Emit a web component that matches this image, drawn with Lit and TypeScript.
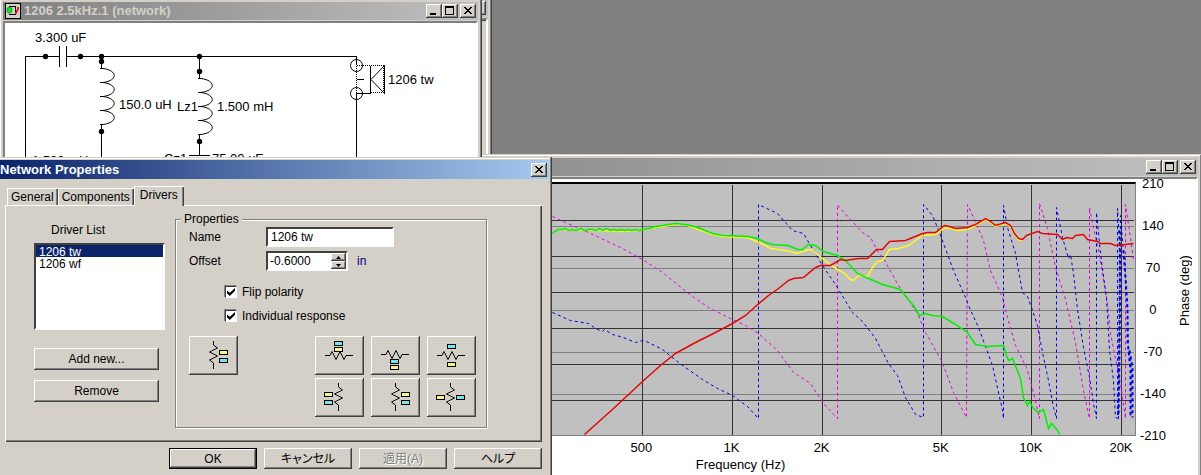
import { LitElement, html, css, svg, nothing } from "lit";
import { customElement, property, state } from "lit/decorators.js";
import { classMap } from "lit/directives/class-map.js";

type Point = [number, number];

const base = css`
  :host {
    display: block;
    box-sizing: border-box;
    font-family: "Liberation Sans", "Noto Sans CJK JP", sans-serif;
    font-size: 12px;
    line-height: 14px;
    color: #000;
  }
  *, *::before, *::after { box-sizing: border-box; }
  button, input, select { font: inherit; color: inherit; margin: 0; border-radius: 0; }
  button {
    display: flex;
    align-items: center;
    justify-content: center;
    padding: 0;
    border: 0;
    background: #d4d0c8;
    box-shadow: inset -1px -1px #404040, inset 1px 1px #fff, inset -2px -2px #808080;
  }
`;

/* Window frame with a title bar; the body is slotted in. */
@customElement("window-frame")
class WindowFrame extends LitElement {
  @property() caption = "";
  @property({ type: Boolean }) active = false;
  @property({ type: Boolean }) dialog = false;

  static styles = [base, css`
    .frame {
      height: 100%;
      display: flex;
      flex-direction: column;
      padding: 4px;
      background: #d4d0c8;
      box-shadow: inset -1px -1px #404040, inset 1px 1px #d4d0c8, inset -2px -2px #808080, inset 2px 2px #fff;
    }
    .dialog { padding: 3px; }
    .bar {
      flex: none;
      display: flex;
      align-items: center;
      gap: 3px;
      height: 18px;
      padding: 0 2px;
      color: #d4d0c8;
      background: linear-gradient(to right, #808080, #c0c0c0);
      font-size: 13px;
      font-weight: bold;
    }
    .active .bar { height: 19px; padding-left: 0; color: #fff; background: linear-gradient(to right, #0a246a, #a6caf0); }
    .caption { flex: 1; white-space: nowrap; overflow: hidden; }
    .controls { display: flex; }
    .controls button { width: 16px; height: 14px; color: #000; }
    .controls .close { margin-left: 2px; }
    .body { flex: 1; min-height: 0; margin-top: 1px; border: 2px solid; border-color: #808080 #fff #fff #808080; box-shadow: inset 1px 1px #404040; overflow: hidden; }
    .dialog .body { border: 0; box-shadow: none; margin: 0; overflow: visible; }
    svg { display: block; shape-rendering: crispEdges; }
  `];

  render() {
    return html`
      <section class=${classMap({ frame: true, active: this.active, dialog: this.dialog })}>
        <header class="bar">
          <slot name="icon"></slot>
          <span class="caption">${this.caption}</span>
          <span class="controls">
            ${this.dialog ? nothing : html`
              <button aria-label="Minimize"><svg width="16" height="14"><path d="M4 9h6v2H4z" /></svg></button>
              <button aria-label="Maximize"><svg width="16" height="14"><path fill-rule="evenodd" d="M3 2h9v9H3zM4 4v6h7V4z" /></svg></button>`}
            <button class="close" aria-label="Close"><svg width="16" height="14"><path d="M4 3h2v1h1v1h2V4h1V3h2v1h-1v1h-1v1H9v1h1v1h1v1h1v1h-2V9H9V8H7v1H6v1H4V9h1V8h1V7h1V6H6V5H5V4H4z" /></svg></button>
          </span>
        </header>
        <div class="body"><slot></slot></div>
      </section>`;
  }
}

/* Crossover circuit drawing. */
@customElement("network-schematic")
class NetworkSchematic extends LitElement {
  static styles = [base, css`
    :host { background: #fff; height: 100%; }
    svg { display: block; font-size: 13px; }
    .wire { fill: none; stroke: #000; shape-rendering: crispEdges; }
    .coil { fill: none; stroke: #000; }
    .dots { stroke-dasharray: 1 1; }
  `];

  private coil(x: number, y: number) {
    const turns = [0, 14, 28, 42].map((d) => `M${x - 1} ${y + d}h3c15 2 15 12 0 14h-3`).join("");
    return svg`<path class="coil" d=${turns} />`;
  }

  render() {
    const nodes: Point[] = [[45, 56], [80, 56], [101, 56], [101, 61], [101, 131], [199, 56], [199, 71], [199, 141]];
    const labels: [number, number, string][] = [
      [35, 42, "3.300 uF"], [119, 109, "150.0 uH"], [177, 111, "Lz1"], [217, 111, "1.500 mH"],
      [388, 84, "1206 tw"], [164, 163, "Cz1"], [212, 163, "75.00 uF"], [32, 165, "1.500 mH"],
    ];
    return html`
      <svg width="472" height="160" viewBox="5 23 472 160" role="img" aria-label="Network schematic">
        <path class="wire" d="M25.5 190V56.5H59.5M59.5 46v21M66.5 46v21M66.5 56.5H356.5V65M101.5 56v12M101.5 124v66M199.5 56v22M199.5 134v21M189 155.5h21M356.5 190V93.5H370.5V66M357 79.5h7M384.5 65v29" />
        <path class="wire dots" d="M356.5 66v27M357 65.5h28M371 92.5h14M383.5 66v27" />
        <path class="coil" d="M384 66L371 79.500L384 93" />
        <circle class="coil" cx="356.500" cy="65.500" r="6" />
        <circle class="coil" cx="356.500" cy="93.500" r="6" />
        ${this.coil(101, 68.5)} ${this.coil(199, 78.5)}
        ${nodes.map(([x, y]) => svg`<circle cx=${x + 0.5} cy=${y + 0.5} r="2.700" />`)}
        ${labels.map(([x, y, t]) => svg`<text x=${x} y=${y}>${t}</text>`)}
      </svg>`;
  }
}

const PLOT = { left: 345, top: 184, width: 790, height: 251 };

const GREEN = "552,233 554,231 558,229 562,229 565,228 568,230 572,229 576,230 580,228 584,230 588,229 592,229 596,230 599,228 602,230 606,228 610,230 613,229 617,230 621,229 624,230 628,229 631,230 635,229 639,230 642,229 648,228 655,226 662,225 668,224 675,223 685,224 694,226 702,229 712,233 722,235 748,236 757,238 765,242 772,244 788,245 797,249 802,249 808,244 815,245 823,251 837,255 845,260 857,273 868,278 882,284 900,289 906,297 913,305 919,315 925,313 932,315 942,316 955,324 967,332 975,344 987,346 1003,345 1006,355 1008,360 1012,358 1020,378 1023,397 1027,405 1029,401 1033,408 1038,412 1043,409 1048,428 1051,423 1057,430 1059,434";
const YELLOW = "558,229 600,230 620,231 635,230 655,227 675,224 685,224 695,228 712,234 722,236 745,237 752,239 765,245 770,248 785,250 797,253 805,250 810,249 815,252 823,259 837,269 843,272 850,279 853,280 858,275 867,276 872,267 877,261 882,260 889,249 898,248 908,245 922,235 935,234 944,227 950,228 957,230 967,229 975,225 985,219 990,222 995,226 1005,223 1010,226 1014,234 1018,239 1022,240";
const RED = "584,434 613,408 642,381 660,365 675,353 695,342 713,333 732,323 745,315 755,306 768,295 778,288 788,280 793,278 803,277 815,267 820,265 830,265 840,259 845,260 858,258 867,258 876,249 882,249 889,241 905,240 922,233 927,232 935,232 944,225 949,226 955,228 967,227 975,224 985,218 990,221 995,225 1005,222 1010,225 1014,233 1018,238 1022,239 1026,235 1037,231 1042,233 1057,234 1062,239 1066,237 1072,238 1075,235 1083,234 1087,239 1097,241 1100,243 1110,243 1115,245 1125,244 1133,243";
const BLUE = "552,312 570,320 588,323 595,328 602,331 604,329 612,334 623,337 635,342 642,340 646,341 662,349 678,362 702,379 717,388 732,395 747,406 758,418 758,204 777,213 792,230 803,233 822,265 835,284 852,312 862,321 875,338 888,363 897,375 905,397 915,414 923,417 923,204 932,215 939,232 953,270 965,297 968,305 978,327 992,365 1002,410 1003,418 1003,205 1007,227 1015,253 1022,292 1027,296 1031,307 1037,325 1042,352 1048,380 1053,407 1056,418 1056,207 1062,237 1068,258 1070,254 1073,273 1077,309 1083,347 1089,377 1093,403 1096,418 1096,212 1100,253 1106,298 1109,350 1113,380 1115,417 1117,418 1117,208 1119,240 1118,418 1120,215 1125,277 1127,309 1128,350 1131,367 1130,417";
const BLUE_TAIL = "1119,230 1120,280 1118,416 M1123,250 1125,277 1127,309 1127,340 1130,370 1130,417 M1129,350 1132,367 1132,417";
const MAGENTA = "552,216 565,222 588,232 620,247 642,259 662,272 688,293 708,307 732,319 745,325 758,333 777,350 793,372 810,383 823,403 837,418 837,204 840,208 862,232 870,237 878,252 883,258 898,285 905,295 917,313 925,332 941,360 953,392 966,417 967,204 973,217 983,240 990,270 1002,297 1007,317 1015,345 1026,367 1032,388 1039,418 1039,203 1047,228 1055,267 1065,299 1075,342 1083,390 1089,418 1089,207 1093,227 1098,250 1107,303 1110,333 1120,383 1125,418 1125,204 1130,237 1133,260";

/* Frequency response and phase plot. */
@customElement("response-chart")
class ResponseChart extends LitElement {
  static styles = [base, css`
    :host { height: 100%; background: #fff; font-size: 13px; }
    .chart {
      display: grid;
      grid-template-columns: minmax(0, 1fr) 32px 24px;
      grid-template-rows: 258px 20px 16px;
      padding: 0 4px 0 39px;
    }
    .plot { border: 2px solid; border-color: #000 #808080 #808080 #000; border-right-width: 1px; border-left-width: 0; border-bottom-width: 1px; background: #c0c0c0; margin-top: 3px; height: 254px; }
    svg { display: block; width: 100%; height: 100%; overflow: visible; }
    path { vector-effect: non-scaling-stroke; }
    .major { fill: none; stroke: #333; shape-rendering: crispEdges; }
    .minor { fill: none; stroke: #808080; shape-rendering: crispEdges; }
    .trace { fill: none; }
    .green { stroke: #00f000; stroke-width: 1.500; }
    .yellow { stroke: #fff820; stroke-width: 1.500; }
    .red { stroke: #e00808; stroke-width: 1.500; }
    .blue { stroke: #0000d8; stroke-dasharray: 3 3; }
    .heavy { stroke: #0000f0; stroke-width: 2; }
    .magenta { stroke: #e000e0; stroke-dasharray: 3 3; }
    .middle { text-anchor: middle; }
    .name { text-align: center; line-height: 16px; }
    .side { writing-mode: vertical-rl; transform: rotate(180deg); justify-self: end; text-align: center; padding-top: 34px; }
  `];

  render() {
    const xs: [number, string][] = [[642, "500"], [732, "1K"], [822, "2K"], [941, "5K"], [1031, "10K"], [1121, "20K"]];
    const majors = [220, 256, 292, 328, 364, 400];
    const minors = [226, 268, 310, 352, 394];
    const ys = [210, 140, 70, 0, -70, -140, -210];
    const trace = (name: string, pts: string) => svg`<path class=${`trace ${name}`} transform="translate(0.5 0.5)" d=${"M" + pts} />`;
    return html`
      <div class="chart">
        <div class="plot">
          <svg viewBox="${PLOT.left} ${PLOT.top} ${PLOT.width} ${PLOT.height}" preserveAspectRatio="none" role="img" aria-label="Frequency response">
            <path class="minor" d=${minors.map((y) => `M345 ${y + 0.5}H1134`).join("")} />
            <path class="major" d=${majors.map((y) => `M345 ${y + 0.5}H1134`).join("") + xs.map(([x]) => `M${x + 0.5} 185V435`).join("")} />
            ${trace("magenta", MAGENTA)}
            ${trace("blue", BLUE)}
            ${trace("blue heavy", BLUE_TAIL)}
            ${trace("yellow", YELLOW)}
            ${trace("green", GREEN)}
            ${trace("red", RED)}
          </svg>
        </div>
        <svg class="middle">
          ${ys.map((v, i) => svg`<text x="53%" y=${`${(9 + i * 42) / 2.58}%`}>${v}</text>`)}
        </svg>
        <div class="side">Phase (deg)</div>
        <svg class="middle">
          ${xs.map(([x, t]) => svg`<text x=${`${((x - 1 - PLOT.left) / PLOT.width) * 100}%`} y="15">${t}</text>`)}
        </svg>
        <span></span><span></span>
        <div class="name">Frequency (Hz)</div>
      </div>`;
  }
}

interface Placement { label: string; vertical: boolean; x: number; y: number; yellow: Point; blue: Point }

const SINGLE: Placement = { label: "Labels beside part", vertical: true, x: 24, y: 19, yellow: [30, 14], blue: [30, 22] };
const PLACEMENTS: Placement[] = [
  { label: "Labels above", vertical: false, x: 24, y: 19, yellow: [19, 11], blue: [19, 5] },
  { label: "Labels below", vertical: false, x: 24, y: 18, yellow: [19, 29], blue: [19, 23] },
  { label: "Labels above and below", vertical: false, x: 24, y: 19, yellow: [20, 26], blue: [20, 8] },
  { label: "Labels left", vertical: true, x: 23, y: 19, yellow: [9, 14], blue: [9, 22] },
  { label: "Labels right", vertical: true, x: 24, y: 19, yellow: [30, 14], blue: [30, 22] },
  { label: "Labels left and right", vertical: true, x: 23, y: 19, yellow: [9, 17], blue: [29, 17] },
];

/* Property sheet for the drivers of a network. */
@customElement("network-properties")
class NetworkProperties extends LitElement {
  @state() private tab = "Drivers";

  static styles = [base, css`
    :host { padding: 7px 7px 0 5px; }
    .tabs { display: flex; align-items: flex-end; height: 19px; padding-left: 2px; }
    .tab {
      height: 17px;
      padding: 0 4px;
      background: #d4d0c8;
      box-shadow: inset 1px 1px #fff, inset -1px 0 #404040, inset -2px 0 #808080;
    }
    .tab.current { position: relative; height: 20px; margin-bottom: -1px; padding: 0 6px 2px; }
    .panel {
      display: flex;
      align-items: flex-start;
      gap: 10px;
      height: 237px;
      padding: 8px 55px 0 29px;
      box-shadow: inset 1px 1px #fff, inset -1px -1px #404040, inset -2px -2px #808080;
    }
    .drivers { width: 131px; display: flex; flex-direction: column; padding-top: 10px; }
    .heading { padding-left: 17px; height: 20px; }
    .list {
      height: 87px;
      margin-bottom: 18px;
      padding: 0;
      overflow: hidden;
      outline: 0;
      background: #fff;
      border: 2px solid;
      border-color: #404040 #fff #fff #404040;
    }
    .list option { min-height: 12px; height: 12px; line-height: 12px; padding: 0 3px; color: #000; }
    .list option:checked { color: #fff; background: #0a246a linear-gradient(#0a246a, #0a246a); }
    .wide { height: 22px; width: 125px; margin-bottom: 10px; }
    .group { flex: 1; min-width: 0; height: 215px; margin: 0; padding: 0 10px 0 13px; border: 1px solid #808080; box-shadow: 1px 1px #fff, inset 1px 1px #fff; }
    .group legend { padding: 0 3px; margin-left: -8px; line-height: 12px; background: #d4d0c8; }
    .row { display: flex; align-items: center; height: 24px; }
    .row label { width: 77px; }
    .field {
      height: 20px;
      width: 128px;
      padding: 0 3px;
      background: #fff;
      border: 2px solid;
      border-color: #404040 #fff #fff #404040;
      outline: 0;
    }
    .spin { display: flex; width: 82px; height: 20px; border: 2px solid; border-color: #404040 #fff #fff #404040; background: #fff; }
    .spin input { flex: 1; min-width: 0; border: 0; padding: 0 2px; outline: 0; background: none; }
    .arrows { width: 15px; display: flex; flex-direction: column; }
    .arrows button { height: 8px; }
    .unit { margin-left: 9px; color: #000080; }
    .checks { padding: 7px 0 0 36px; }
    .check { display: flex; align-items: center; gap: 5px; height: 24px; }
    .check input { appearance: none; width: 12px; height: 12px; background: #fff; border: 1px solid; border-color: #404040 #fff #fff #404040; box-shadow: -1px -1px #808080; }
    .check input:checked::after { content: ""; display: block; width: 8px; height: 8px; margin: 1px; background: #000; clip-path: polygon(0 30%, 35% 60%, 100% 0, 100% 35%, 35% 100%, 0 65%); }
    .icons { display: flex; justify-content: space-between; align-items: flex-start; padding-top: 8px; }
    .grid { display: grid; grid-template-columns: repeat(3, 49px); gap: 3px 7px; }
    .icon { width: 49px; height: 39px; }
    .icon svg { display: block; }
    .zig { fill: none; stroke: #000; }
    .chip { stroke: #000; }
    .yellow { fill: #f8f488; }
    .blue { fill: #78e4ec; }
    .actions { display: flex; justify-content: flex-end; gap: 7px; padding-top: 6px; }
    .actions button { width: 88px; height: 21px; font-feature-settings: "palt"; }
    .actions .primary { box-shadow: inset 0 0 0 1px #000, inset -2px -2px #404040, inset 2px 2px #fff, inset -3px -3px #808080; }
    .actions button:disabled { color: #808080; text-shadow: 1px 1px #fff; }
  `];

  private icon(p: Placement) {
    const zig = p.vertical
      ? `M${p.x + 0.5} 5v4l4 3l-8 4l8 4l-8 4l4 3v6`
      : `M10 ${p.y + 0.5}h5l2 -4l4 8l4 -8l4 8l2 -4h7`;
    const chip = (c: string, [x, y]: Point) => svg`<rect class=${`chip ${c}`} x=${x + 0.5} y=${y + 0.5} width="8" height="4" />`;
    return html`<button class="icon" aria-label=${p.label}>
      <svg width="49" height="39"><path class="zig" d=${zig} />${chip("blue", p.blue)}${chip("yellow", p.yellow)}</svg>
    </button>`;
  }

  render() {
    return html`
      <nav class="tabs" role="tablist">
        ${["General", "Components", "Drivers"].map((t) => html`
          <button role="tab" aria-selected=${t === this.tab} class=${classMap({ tab: true, current: t === this.tab })} @click=${() => (this.tab = t)}>${t}</button>`)}
      </nav>
      <div class="panel">
        <div class="drivers">
          <label class="heading" for="drivers">Driver List</label>
          <select class="list" id="drivers" size="7">
            <option selected>1206 tw</option>
            <option>1206 wf</option>
          </select>
          <button class="wide">Add new...</button>
          <button class="wide">Remove</button>
        </div>
        <fieldset class="group">
          <legend>Properties</legend>
          <div class="row"><label for="name">Name</label><input class="field" id="name" .value=${"1206 tw"} /></div>
          <div class="row">
            <label for="offset">Offset</label>
            <span class="spin">
              <input id="offset" .value=${"-0.6000"} />
              <span class="arrows">
                <button aria-label="Increase"><svg width="5" height="3"><path d="M0 3L2.500 0L5 3z" /></svg></button>
                <button aria-label="Decrease"><svg width="5" height="3"><path d="M0 0L2.500 3L5 0z" /></svg></button>
              </span>
            </span>
            <span class="unit">in</span>
          </div>
          <div class="checks">
            <label class="check"><input type="checkbox" checked />Flip polarity</label>
            <label class="check"><input type="checkbox" checked />Individual response</label>
          </div>
          <div class="icons">
            ${this.icon(SINGLE)}
            <div class="grid">${PLACEMENTS.map((p) => this.icon(p))}</div>
          </div>
        </fieldset>
      </div>
      <footer class="actions">
        <button class="primary">OK</button>
        <button>キャンセル</button>
        <button disabled>適用(A)</button>
        <button>ヘルプ</button>
      </footer>`;
  }
}

@customElement("app-root")
class AppRoot extends LitElement {
  static styles = [base, css`
    .desktop { position: relative; height: 100vh; overflow: hidden; background: #808080; }
    window-frame { position: absolute; }
    .back { left: 260px; top: -5px; width: 232px; height: 420px; }
    .network { left: -1px; top: -2px; width: 483px; height: 300px; }
    .response { left: 300px; right: -1px; top: 154px; height: 360px; }
    .properties { left: -3px; top: 157px; width: 555px; height: 326px; }
    .appicon { display: block; }
  `];

  render() {
    return html`
      <main class="desktop">
        <window-frame class="back"></window-frame>
        <window-frame class="response"><response-chart></response-chart></window-frame>
        <window-frame class="network" caption="1206 2.5kHz.1 (network)">
          <svg slot="icon" class="appicon" width="16" height="16" viewBox="0 0 16 16">
            <path d="M0 0h16v16H0z" />
            <path fill="#d4d0c8" d="M1 1h14v14H1z" />
            <path fill="none" stroke="#000" d="M4 3.500h7M4 11.500h7M10.500 4v7" />
            <path fill="none" stroke="#e02020" stroke-width="2" d="M13 4v3M12 7v2M11 9v2" />
            <path fill="#10e020" stroke="#087810" stroke-width="0.500" d="M2 5h1v-1h3v1h1v4h-1v1h-3v-1h-1z" />
          </svg>
          <network-schematic></network-schematic>
        </window-frame>
        <window-frame class="properties" caption="Network Properties" active dialog>
          <network-properties></network-properties>
        </window-frame>
      </main>`;
  }
}
